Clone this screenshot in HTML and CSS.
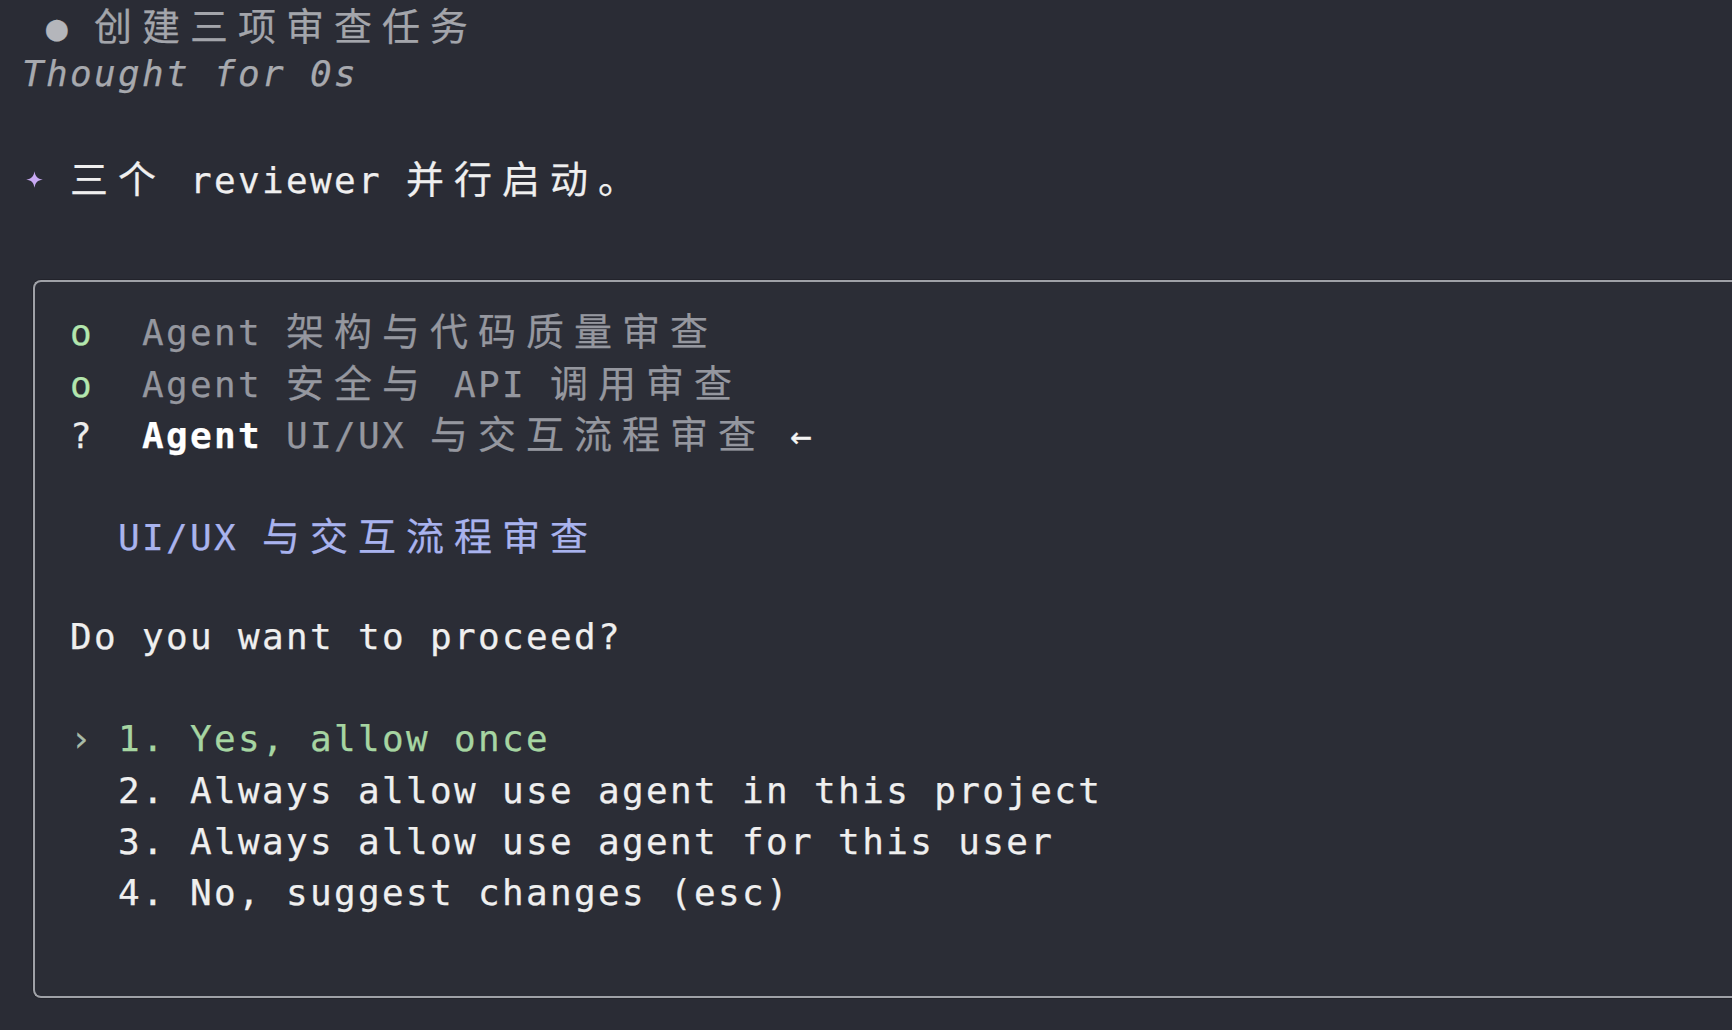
FILE: index.html
```html
<!DOCTYPE html>
<html lang="zh">
<head>
<meta charset="utf-8">
<title>Terminal</title>
<link rel="stylesheet" href="styles.css">
</head>
<body>
<div class="term">
  <div class="row first dim-head"> <span class="dot">●</span> <span class="cjk">创建三项审查任务</span></div>
  <div class="row thought">Thought for 0s</div>
  <div class="row"> </div>
  <div class="row"><span class="star"><svg width="19" height="19" viewBox="0 0 16 16"><path d="M8 1 C8.8 5.6 10.4 7.2 15 8 C10.4 8.8 8.8 10.4 8 15 C7.2 10.4 5.6 8.8 1 8 C5.6 7.2 7.2 5.6 8 1Z" fill="#c8a9f3"/></svg></span> <span class="cjk">三个</span> reviewer <span class="cjk">并行启动。</span></div>
  <div class="row"> </div>
  <div class="box">
    <div class="row"><span class="ok">o</span>  <span class="muted">Agent <span class="cjk">架构与代码质量审查</span></span></div>
    <div class="row"><span class="ok">o</span>  <span class="muted">Agent <span class="cjk">安全与</span> API <span class="cjk">调用审查</span></span></div>
    <div class="row"><span class="q">?</span>  <b class="strong">Agent</b> <span class="muted">UI/UX <span class="cjk">与交互流程审查</span></span> <span class="arrow">←</span></div>
    <div class="row"> </div>
    <div class="row">  <span class="title">UI/UX <span class="cjk">与交互流程审查</span></span></div>
    <div class="row"> </div>
    <div class="row">Do you want to proceed?</div>
    <div class="row"> </div>
    <div class="row"><span class="caret">›</span> <span class="sel">1. Yes, allow once</span></div>
    <div class="row">  2. Always allow use agent in this project</div>
    <div class="row">  3. Always allow use agent for this user</div>
    <div class="row">  4. No, suggest changes (esc)</div>
    <div class="row"> </div>
  </div>
</div>
</body>
</html>
```

FILE: styles.css
```css
html, body {
  margin: 0;
  height: 100%;
  background: #2a2c35;
  overflow: hidden;
}

.term {
  font-family: "DejaVu Sans Mono", "Noto Sans CJK SC", monospace;
  font-size: 36px;
  letter-spacing: 2.33px;
  color: #efefef;
  padding-left: 22px;
  -webkit-text-stroke: 0.25px currentColor;
}

.row {
  height: 51.25px;
  line-height: 51.25px;
  white-space: pre;
}

.row.first {
  height: 48.25px;
  line-height: 48.25px;
}

.cjk {
  font-family: "Noto Sans CJK SC", sans-serif;
  font-size: 38px;
  letter-spacing: 10px;
}

.dim-head {
  color: #a3a5ab;
}

.dot {
  color: #b4b6bb;
}

.thought {
  font-style: italic;
  color: #a7a9ae;
}

.star {
  display: inline-block;
  width: 24px;
  text-align: center;
  vertical-align: middle;
  line-height: 0;
  letter-spacing: 0;
}

.star svg {
  display: inline-block;
  position: relative;
  top: -3px;
}

.box {
  margin-left: 11px;
  margin-right: -60px;
  margin-top: 27px;
  border: 2px solid #9fa1a7;
  border-right: none;
  border-radius: 8px 0 0 8px;
  padding: 21px 0 26px 35px;
  background: #2b2d36;
  box-shadow: 0 0 0 1px rgba(20, 21, 26, 0.35);
}

.ok {
  color: #b3e6ae;
}

.muted {
  color: #95979f;
}

.q {
  color: #ececec;
}

.strong {
  color: #ffffff;
  font-weight: bold;
}

.arrow {
  color: #f4f4f4;
}

.title {
  color: #a9b3ee;
}

.caret {
  color: #a8bba8;
}

.sel {
  color: #a6d5a2;
}
```
